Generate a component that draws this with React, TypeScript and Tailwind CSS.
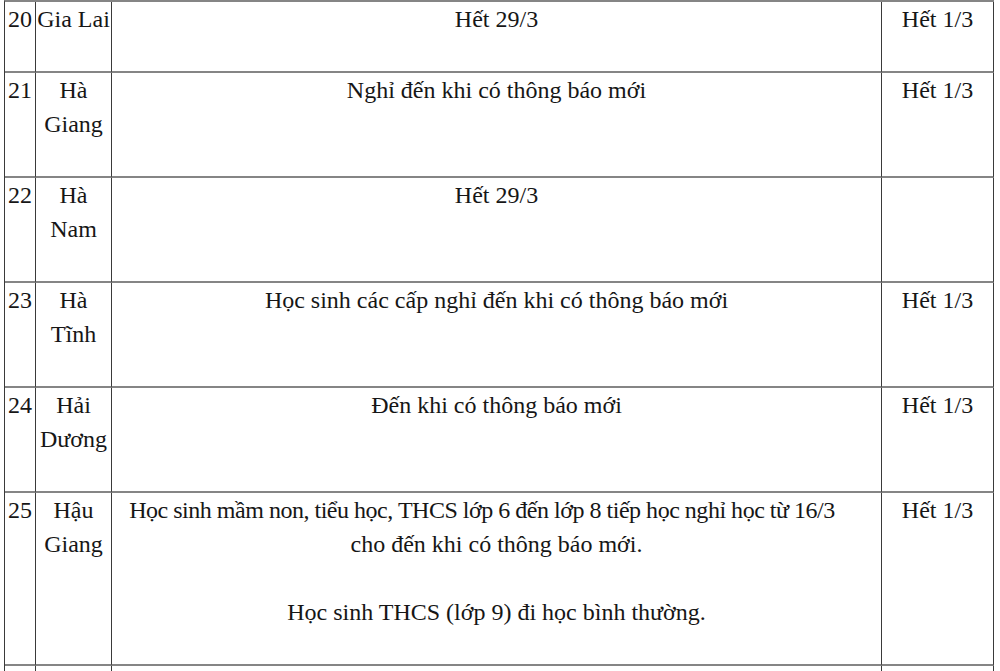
const rows: { no: string; name: string[]; note: string[][]; until: string }[] = [
  { no: "20", name: ["Gia Lai"], note: [["Hết 29/3"]], until: "Hết 1/3" },
  { no: "21", name: ["Hà", "Giang"], note: [["Nghỉ đến khi có thông báo mới"]], until: "Hết 1/3" },
  { no: "22", name: ["Hà", "Nam"], note: [["Hết 29/3"]], until: "" },
  { no: "23", name: ["Hà", "Tĩnh"], note: [["Học sinh các cấp nghỉ đến khi có thông báo mới"]], until: "Hết 1/3" },
  { no: "24", name: ["Hải", "Dương"], note: [["Đến khi có thông báo mới"]], until: "Hết 1/3" },
  {
    no: "25",
    name: ["Hậu", "Giang"],
    note: [
      [
        "Học sinh mầm non, tiểu học, THCS lớp 6 đến lớp 8 tiếp học nghỉ học từ 16/3",
        "cho đến khi có thông báo mới.",
      ],
      ["Học sinh THCS (lớp 9) đi học bình thường."],
    ],
    until: "Hết 1/3",
  },
  { no: "26", name: ["Hòa", "Bình"], note: [["Học sinh nghỉ học đến hết ngày 31/3"]], until: "Hết 1/3" },
];

const cell =
  "align-top border-b-2 border-b-[#858585] border-r border-r-[#3a3a3a] pt-0 pb-[35px]";

export default function App() {
  return (
    <div className="h-[671px] w-[1000px] overflow-hidden bg-white font-['Liberation_Serif','Times_New_Roman',serif] text-[24px] leading-[34px] text-[#161616]">
      <table className="ml-1 w-[989px] table-fixed border-separate border-spacing-0 border-t-2 border-l border-t-[#858585] border-l-[#3a3a3a]">
        <colgroup>
          <col className="w-[31px]" />
          <col className="w-[76px]" />
          <col className="w-[770px]" />
          <col className="w-[112px]" />
        </colgroup>
        <tbody>
          {rows.map((r) => (
            <tr key={r.no}>
              <td className={`${cell} pl-[3px]`}>{r.no}</td>
              <td className={`${cell} text-center`}>
                {r.name.map((n) => (
                  <div key={n}>{n}</div>
                ))}
              </td>
              <td className={`${cell} text-center`}>
                {r.note.map((p, i) => (
                  <div key={i} className={i > 0 ? "mt-[34px]" : ""}>
                    {p.map((l, j) => (
                      <div
                        key={l}
                        className={p.length > 1 && j === 0 ? "whitespace-nowrap pr-[29px] tracking-[-0.48px]" : ""}
                      >
                        {l}
                      </div>
                    ))}
                  </div>
                ))}
              </td>
              <td className={`${cell} text-center`}>{r.until}</td>
            </tr>
          ))}
        </tbody>
      </table>
    </div>
  );
}
